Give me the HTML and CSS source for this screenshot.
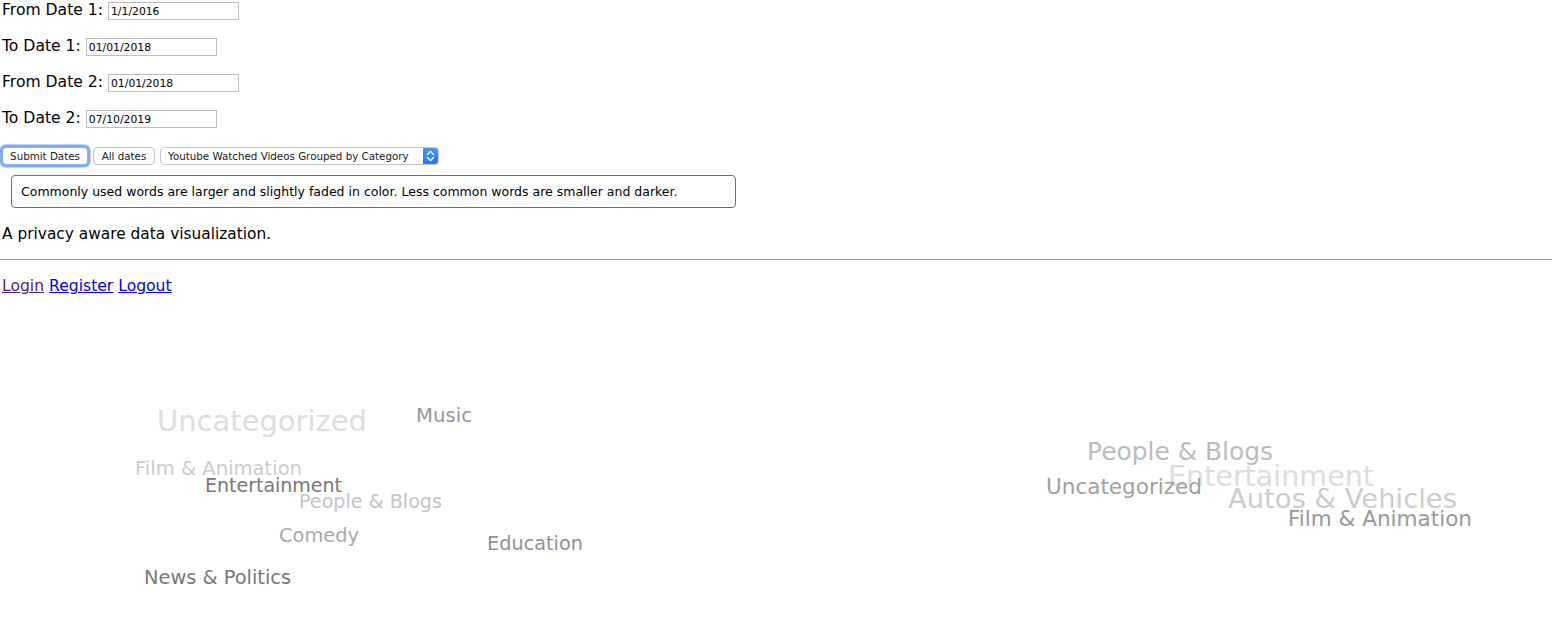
FILE: index.html
```html
<!DOCTYPE html>
<html>
<head>
<meta charset="utf-8">
<title>Word cloud</title>
<link rel="stylesheet" href="styles.css">
</head>
<body>
<div class="page">
  <form class="dates">
    <div class="row"><label class="lbl">From Date 1:</label><input class="date" type="text" value="1/1/2016"></div>
    <div class="row"><label class="lbl">To Date 1:</label><input class="date" type="text" value="01/01/2018"></div>
    <div class="row"><label class="lbl">From Date 2:</label><input class="date" type="text" value="01/01/2018"></div>
    <div class="row"><label class="lbl">To Date 2:</label><input class="date" type="text" value="07/10/2019"></div>
  </form>
  <div class="controls">
    <button class="btn btn-focus" type="button">Submit Dates</button>
    <button class="btn" type="button">All dates</button>
    <div class="select">
      <span class="select-text">Youtube Watched Videos Grouped by Category</span>
      <span class="select-arrow">
        <svg width="15" height="18" viewBox="0 0 15 18"><path d="M4.5 7.5 L7.5 4.5 L10.5 7.5 M4.5 10.5 L7.5 13.5 L10.5 10.5" fill="none" stroke="#fff" stroke-width="1.4" stroke-linecap="round" stroke-linejoin="round"/></svg>
      </span>
    </div>
  </div>
  <div class="info">Commonly used words are larger and slightly faded in color. Less common words are smaller and darker.</div>
  <p class="tagline">A privacy aware data visualization.</p>
  <hr class="rule">
  <div class="links"><a class="visited" href="#">Login</a> <a href="#">Register</a> <a href="#">Logout</a></div>
  <div class="clouds">
    <svg class="cloud" width="776" height="325" viewBox="0 0 776 325">
      <text x="157" y="132" font-size="29" fill="#dddddd" textLength="210" lengthAdjust="spacingAndGlyphs">Uncategorized</text>
      <text x="416" y="123" font-size="19" fill="#999999" textLength="56" lengthAdjust="spacingAndGlyphs">Music</text>
      <text x="135" y="176" font-size="19" fill="#cccccc" textLength="167" lengthAdjust="spacingAndGlyphs">Film &amp; Animation</text>
      <text x="205" y="193" font-size="19" fill="#777777" textLength="137" lengthAdjust="spacingAndGlyphs">Entertainment</text>
      <text x="299" y="209" font-size="19" fill="#c4c4c4" textLength="143" lengthAdjust="spacingAndGlyphs">People &amp; Blogs</text>
      <text x="279" y="243" font-size="19" fill="#aaaaaa" textLength="80" lengthAdjust="spacingAndGlyphs">Comedy</text>
      <text x="487" y="251" font-size="19" fill="#919191" textLength="96" lengthAdjust="spacingAndGlyphs">Education</text>
      <text x="144" y="285" font-size="19" fill="#777777" textLength="147" lengthAdjust="spacingAndGlyphs">News &amp; Politics</text>
    </svg>
    <svg class="cloud" width="776" height="325" viewBox="0 0 776 325">
      <text x="311" y="161" font-size="25" fill="#bbbbbb" textLength="186" lengthAdjust="spacingAndGlyphs">People &amp; Blogs</text>
      <text x="392" y="187" font-size="28" fill="#dddddd" textLength="206" lengthAdjust="spacingAndGlyphs">Entertainment</text>
      <text x="270" y="195" font-size="22" fill="#a0a0a0" textLength="156" lengthAdjust="spacingAndGlyphs">Uncategorized</text>
      <text x="452" y="209" font-size="27" fill="#cccccc" textLength="229" lengthAdjust="spacingAndGlyphs">Autos &amp; Vehicles</text>
      <text x="512" y="227" font-size="22" fill="#999999" textLength="184" lengthAdjust="spacingAndGlyphs">Film &amp; Animation</text>
    </svg>
  </div>
</div>
</body>
</html>
```

FILE: styles.css
```css
html, body {
  margin: 0;
  padding: 0;
  background: #ffffff;
}
body {
  font-family: "DejaVu Sans", "Noto Sans", sans-serif;
  color: #000;
  width: 1552px;
  height: 625px;
  overflow: hidden;
}
.page {
  display: flex;
  flex-direction: column;
}
.dates {
  display: flex;
  flex-direction: column;
  gap: 18px;
  padding-top: 2px;
  margin: 0;
}
.row {
  display: flex;
  align-items: center;
  height: 18px;
}
.lbl {
  font-size: 15.6px;
  padding-left: 2px;
  margin-right: 5px;
  line-height: 18px;
  position: relative;
  top: -1px;
}
.date {
  box-sizing: border-box;
  width: 131px;
  height: 18px;
  border: 1px solid #bdbdbd;
  border-radius: 0;
  padding: 0 2px;
  font-family: "DejaVu Sans", sans-serif;
  font-size: 10.8px;
  color: #000;
  background: #fff;
  outline: none;
  margin: 0;
}
.controls {
  display: flex;
  align-items: center;
  gap: 5px;
  margin-top: 19px;
  padding-left: 2px;
  height: 18px;
}
.btn {
  box-sizing: border-box;
  height: 18px;
  padding: 0 7px;
  border: 1px solid #c3c3c3;
  border-radius: 4px;
  background: #fff;
  font-family: "DejaVu Sans", sans-serif;
  font-size: 10.3px;
  color: #1a1a1a;
  margin: 0;
  line-height: 16px;
}
.btn-focus {
  width: 86px;
  box-shadow: 0 0 0 2px #7eaaf5, 0 0 1px 3px #b9d1fa;
  border-color: #8fb3f0;
}
.btn + .btn {
  width: 62px;
}
.select {
  box-sizing: border-box;
  width: 279px;
  height: 18px;
  border: 1px solid #c8c8c8;
  border-radius: 4px;
  display: flex;
  align-items: center;
  justify-content: space-between;
  background: #fff;
  overflow: hidden;
}
.select-text {
  font-size: 10.3px;
  color: #1a1a1a;
  padding-left: 7px;
  white-space: nowrap;
}
.select-arrow {
  width: 15px;
  height: 18px;
  background: linear-gradient(#4d98f8, #2274ee);
  display: flex;
  align-items: center;
  justify-content: center;
  border-radius: 0 3px 3px 0;
}
.info {
  box-sizing: border-box;
  margin-top: 10px;
  margin-left: 11px;
  width: 725px;
  height: 33px;
  border: 1px solid #6e6e6e;
  border-radius: 4px;
  padding: 0 9px;
  font-size: 12.5px;
  line-height: 32px;
  white-space: nowrap;
}
.tagline {
  margin: 17px 0 0 2px;
  font-size: 15.4px;
  line-height: 19px;
}
.rule {
  margin: 15px 0 0 0;
  border: 0;
  border-top: 1px solid #9a9a9a;
  height: 0;
  width: 100%;
}
.links {
  margin-top: 17px;
  padding-left: 2px;
  font-size: 15.6px;
  line-height: 19px;
}
.links a {
  color: #0000ee;
}
.links a.visited {
  color: #551a8b;
}
.clouds {
  display: flex;
  margin-top: 3px;
}
.cloud {
  display: block;
  font-family: "DejaVu Sans", sans-serif;
}
```
